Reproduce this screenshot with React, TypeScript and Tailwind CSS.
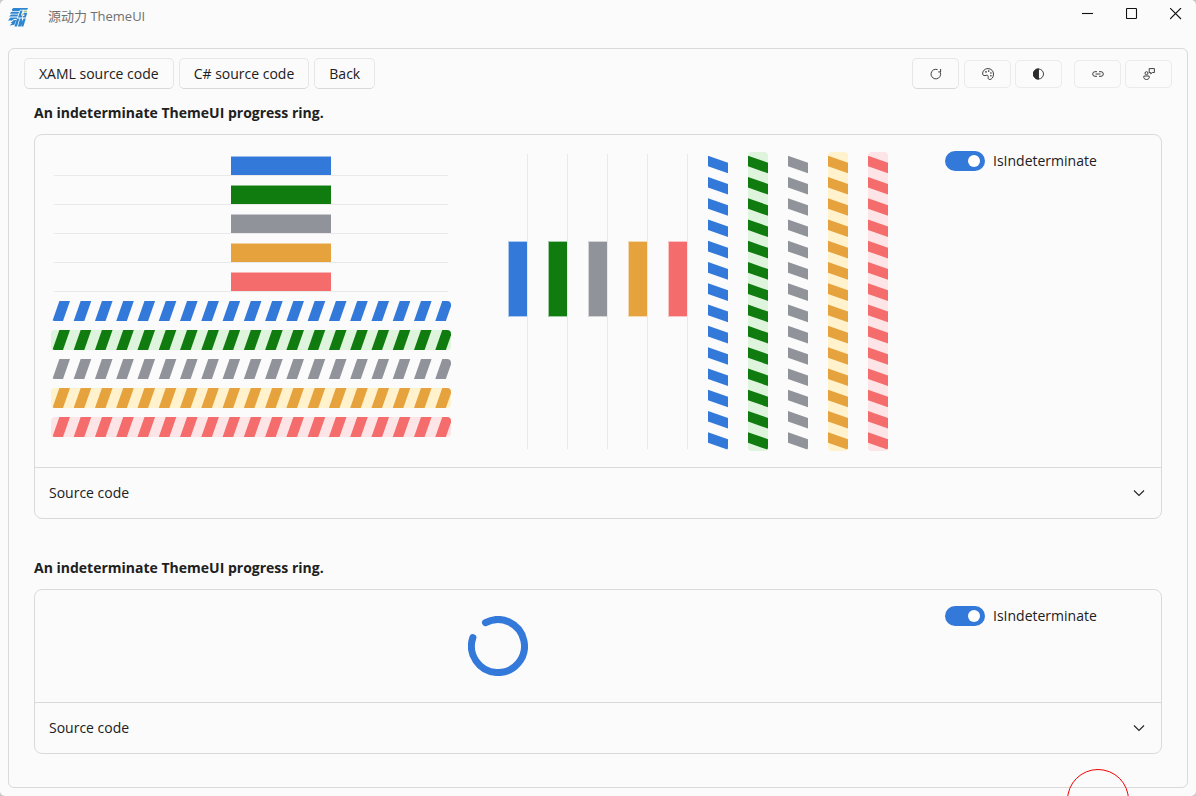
import { useState, type ReactNode } from "react";

type Tone = { fill: string; track: string };

const TONES: Tone[] = [
  { fill: "#3379da", track: "transparent" },
  { fill: "#107c10", track: "#dff4dc" },
  { fill: "#909399", track: "transparent" },
  { fill: "#e6a23c", track: "#fff2cc" },
  { fill: "#f56c6c", track: "#fde5e7" },
];

const STRIPE_PITCH = 21.27;
const STRIPE_WIDTH = 10.6;
const STRIPE_SLANT = 7;

function RowBar({ tone }: { tone: Tone }) {
  return (
    <div className="flex h-5 px-[3px]">
      <div className="w-full border-b border-[#e9e9e9] pl-[177px]">
        <div
          className="h-full w-[100px] border-t border-t-white/50"
          style={{ backgroundColor: tone.fill }}
        />
      </div>
    </div>
  );
}

function RowStripes({ tone }: { tone: Tone }) {
  return (
    <div className="h-5 overflow-hidden rounded-[4px]" style={{ backgroundColor: tone.track }}>
      <svg width="400" height="20" viewBox="0 0 400 20" className="block" fill={tone.fill} aria-hidden="true">
        {Array.from({ length: 19 }, (_, i) => {
          const x = 1.4 + i * STRIPE_PITCH;
          return (
            <polygon
              key={i}
              points={`${x + STRIPE_SLANT},0 ${x + STRIPE_SLANT + STRIPE_WIDTH},0 ${x + STRIPE_WIDTH},20 ${x},20`}
            />
          );
        })}
      </svg>
    </div>
  );
}

function ColumnBar({ tone }: { tone: Tone }) {
  return (
    <div className="flex w-5 items-stretch py-0.5">
      <div className="flex w-full flex-col border-r border-[#e9e9e9] pt-[87px]">
        <div
          className="h-[76px] border-y border-l border-white/60"
          style={{ backgroundColor: tone.fill }}
        />
      </div>
    </div>
  );
}

function ColumnStripes({ tone }: { tone: Tone }) {
  return (
    <div className="w-5 overflow-hidden rounded-[4px]" style={{ backgroundColor: tone.track }}>
      <svg width="20" height="299" viewBox="0 0 20 299" className="block" fill={tone.fill} aria-hidden="true">
        {Array.from({ length: 14 }, (_, i) => {
          const y = 3.7 + i * STRIPE_PITCH;
          return (
            <polygon
              key={i}
              points={`0,${y} 20,${y + STRIPE_SLANT} 20,${y + STRIPE_SLANT + STRIPE_WIDTH} 0,${y + STRIPE_WIDTH}`}
            />
          );
        })}
      </svg>
    </div>
  );
}

function Toggle() {
  const [on, setOn] = useState(true);
  return (
    <label className="flex h-5 cursor-pointer items-center gap-2 text-sm">
      <input
        type="checkbox"
        role="switch"
        checked={on}
        onChange={(e) => setOn(e.target.checked)}
        className="flex h-5 w-10 shrink-0 appearance-none items-center rounded-full bg-[#9a9a9a] pl-[5px] before:block before:size-3 before:rounded-full before:bg-white checked:bg-[#3379da] checked:pl-[23px]"
      />
      IsIndeterminate
    </label>
  );
}

function Example({ title, children }: { title: string; children: ReactNode }) {
  return (
    <section>
      <h2 className="text-sm leading-5 font-bold">{title}</h2>
      <div className="mt-[11px] rounded-lg border border-[#dadada]">
        <div className="flex pl-4">
          <div className="min-w-0 flex-1">{children}</div>
          <div className="w-[216px] shrink-0 pt-4">
            <Toggle />
          </div>
        </div>
        <button
          type="button"
          aria-expanded="false"
          className="flex h-[51px] w-full items-center justify-between border-t border-[#dadada] pr-4 pl-3.5 text-sm"
        >
          Source code
          <svg width="12" height="8" viewBox="0 0 12 8" fill="none" stroke="#222" strokeWidth="1.1" aria-hidden="true">
            <path d="M1 1.500 6 6.500l5-5" />
          </svg>
        </button>
      </div>
    </section>
  );
}

function TextButton({ children }: { children: ReactNode }) {
  return (
    <button
      type="button"
      className="h-[31px] rounded-[5px] border border-[#e6e6e6] border-b-[#d8d8d8] px-3.5 text-sm leading-5"
    >
      {children}
    </button>
  );
}

function IconButton({ label, tall, children }: { label: string; tall?: boolean; children: ReactNode }) {
  return (
    <button
      type="button"
      aria-label={label}
      className={
        tall
          ? "flex h-[31px] w-[47px] items-center justify-center rounded-[5px] border border-[#e6e6e6] border-b-[#d8d8d8]"
          : "flex h-7 w-[47px] items-center justify-center rounded-[5px] border border-[#ebebeb]"
      }
    >
      <svg width="12" height="12" viewBox="0 0 12 12" fill="none" stroke="#2b2b2b" strokeWidth="0.9" aria-hidden="true">
        {children}
      </svg>
    </button>
  );
}

function CaptionButton({ label, children }: { label: string; children: ReactNode }) {
  return (
    <button type="button" aria-label={label} className="flex h-7 w-10 items-center justify-center">
      <svg width="12" height="12" viewBox="0 0 12 12" fill="none" stroke="#111" strokeWidth="1.1" aria-hidden="true">
        {children}
      </svg>
    </button>
  );
}

function Logo() {
  return (
    <svg width="20" height="19" viewBox="0 0 20 19" fill="#2f86cf" aria-hidden="true">
      <path d="M5 0h15l-.8 1.800H12l-.6 1.400H3.600l.8-1.300h-.6z" />
      <path d="M3 4h8l-.6 1.800H2z" />
      <path d="M3.400 6.600h6.700l-.7 2H1.200l.8-1.200z" />
      <path d="M2.400 9.500h6.800l-.6 1.600H6l-2 1.400H0z" />
      <path d="M12.400 2.400h2.200l-1 2.900-.6 2.300h1.700l-.8 2H10z" />
      <path d="M15.800 4.700h3.500l-1.500 4.900h-3l.4-1.600h1l.4-1.400h-1.500z" />
      <path d="M15.800 2.700h3.400l-.3 1h-3.400z" fill="#7db94a" />
      <path d="M14.300 5.800h1.500l-.4 1.200h-1.500z" fill="#d9c65b" />
      <path d="M5.800 12h2.400l-1.800 4.800-4.800.6 2.600-2.300H2.400l2-1.500z" />
      <path d="M8.900 10.600h2.500L9 18.400H6.400z" />
      <path d="M12.100 10.600h2l-.3 3.200 1.800-3.200h2.200l-2.400 7.800h-2.200l.7-2.400-1.200 2.400H9.900z" />
    </svg>
  );
}

export default function App() {
  return (
    <div className="relative min-h-screen overflow-hidden bg-[#c9c9c9] font-['Open_Sans','Noto_Sans_CJK_SC',sans-serif] text-[#202020]">
      <div className="flex min-h-screen flex-col rounded-[5px] bg-[#fbfbfb] px-2 pb-2">
        <header className="flex h-12 items-start justify-between">
          <div className="flex h-8 items-center gap-5 pt-0.5">
            <Logo />
            <span lang="zh-CN" className="pb-0.5 text-[13px] leading-5 text-[#707070]">
              源动力 ThemeUI
            </span>
          </div>
          <div className="-mr-2 flex gap-1">
            <CaptionButton label="Minimize">
              <path d="M0 5.500h11" />
            </CaptionButton>
            <CaptionButton label="Maximize">
              <rect x=".5" y=".5" width="10" height="10" rx=".8" />
            </CaptionButton>
            <CaptionButton label="Close">
              <path d="M0 0 11 11M11 0 0 11" />
            </CaptionButton>
          </div>
        </header>

        <main className="flex-1 rounded-md border border-[#dadada] px-[25px] pt-[9px] pb-[33px]">
          <div className="-mx-2.5 flex items-center justify-between">
            <div className="flex gap-[5px]">
              <TextButton>XAML source code</TextButton>
              <TextButton>C# source code</TextButton>
              <TextButton>Back</TextButton>
            </div>
            <div className="flex items-center">
              <IconButton label="Refresh" tall>
                <path d="M10.300 4.300A4.800 4.800 0 1 1 7.600 1.600" />
                <path d="M10.600 1v2.900H8.200" />
              </IconButton>
              <div className="ml-[5px] flex gap-1">
                <IconButton label="Theme colors">
                  <path d="M.7 6.200C.3 3 2.800.6 6 .6c3.200 0 5.500 2.400 5.500 5.400 0 3.200-1.700 5.500-3.800 5.500-1.500 0-1.700-1.100-1.500-2.300C6.400 7.600 5.500 6.900 4.200 7.300 2.600 7.800 1 7.900.7 6.200z" />
                  <g fill="#2b2b2b" stroke="none">
                    <circle cx="4" cy="3.900" r=".8" />
                    <circle cx="6.700" cy="3.100" r=".8" />
                    <circle cx="8.900" cy="5" r=".8" />
                    <circle cx="8.900" cy="7.700" r=".8" />
                  </g>
                </IconButton>
                <IconButton label="Dark mode">
                  <circle cx="5.500" cy="6" r="5" />
                  <path d="M5.500.8a5.200 5.200 0 0 0 0 10.400z" fill="#2b2b2b" />
                </IconButton>
              </div>
              <div className="ml-3 flex gap-1">
                <IconButton label="Copy link">
                  <path d="M5 3.700H3a2.300 2.300 0 0 0 0 4.600H5M7 3.700h2a2.300 2.300 0 0 1 0 4.600H7M3.500 6h5" />
                </IconButton>
                <IconButton label="Send feedback">
                  <circle cx="3.500" cy="5.200" r="1.500" />
                  <path d="M.9 8h5.200c.7 2-.5 3.500-2.600 3.500S.3 10 .9 8zM6.200.6h5.200v3.900H9.400L7.700 5.900V4.500H6.200z" />
                </IconButton>
              </div>
            </div>
          </div>

          <div className="mt-[14px] flex flex-col gap-[39px]">
            <Example title="An indeterminate ThemeUI progress ring.">
              <div className="flex gap-[57px] pt-[17px] pb-4">
                <div className="flex w-[400px] shrink-0 flex-col gap-[9px] pt-1">
                  {TONES.map((tone) => (
                    <RowBar key={tone.fill} tone={tone} />
                  ))}
                  {TONES.map((tone) => (
                    <RowStripes key={tone.fill} tone={tone} />
                  ))}
                </div>
                <div className="flex h-[299px] gap-5">
                  {TONES.map((tone) => (
                    <ColumnBar key={tone.fill} tone={tone} />
                  ))}
                  {TONES.map((tone) => (
                    <ColumnStripes key={tone.fill} tone={tone} />
                  ))}
                </div>
              </div>
            </Example>

            <Example title="An indeterminate ThemeUI progress ring.">
              <div className="flex h-28 items-center justify-center">
                <svg width="60" height="60" viewBox="0 0 60 60" fill="none" role="img" aria-label="Loading">
                  <path
                    d="M17.500 6.700A26.500 26.500 0 1 1 4.900 21.500"
                    stroke="#3379da"
                    strokeWidth="7"
                    strokeLinecap="round"
                  />
                </svg>
              </div>
            </Example>
          </div>
        </main>
      </div>
      <div className="pointer-events-none absolute right-[67px] -bottom-[35px] size-[62px] rounded-full border border-[#f00000]" />
    </div>
  );
}
